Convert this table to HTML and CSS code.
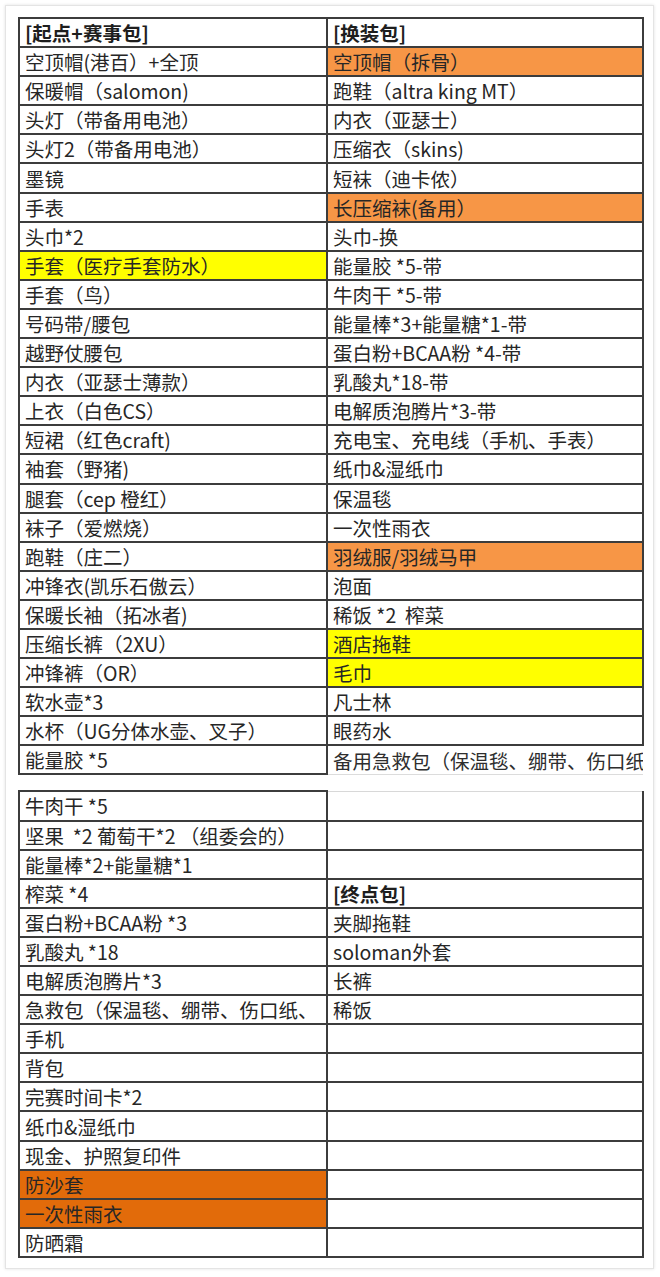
FILE: index.html
```html
<!DOCTYPE html>
<html lang="zh">
<head>
<meta charset="utf-8">
<title>装备清单</title>
<link rel="stylesheet" href="styles.css">
</head>
<body>
<div class="page">
  <div class="card">
    <table class="sheet">
      <colgroup><col class="c1"><col class="c2"></colgroup>
      <tr><td class="hd">[起点+赛事包]</td><td class="hd">[换装包]</td></tr>
      <tr><td>空顶帽(港百）+全顶</td><td class="orange">空顶帽（拆骨）</td></tr>
      <tr><td>保暖帽（salomon)</td><td>跑鞋（altra king MT）</td></tr>
      <tr><td>头灯（带备用电池）</td><td>内衣（亚瑟士）</td></tr>
      <tr><td>头灯2（带备用电池）</td><td>压缩衣（skins)</td></tr>
      <tr><td>墨镜</td><td>短袜（迪卡侬）</td></tr>
      <tr><td>手表</td><td class="orange">长压缩袜(备用）</td></tr>
      <tr><td>头巾*2</td><td>头巾-换</td></tr>
      <tr><td class="yellow">手套（医疗手套防水）</td><td>能量胶 *5-带</td></tr>
      <tr><td>手套（鸟）</td><td>牛肉干 *5-带</td></tr>
      <tr><td>号码带/腰包</td><td>能量棒*3+能量糖*1-带</td></tr>
      <tr><td>越野仗腰包</td><td>蛋白粉+BCAA粉 *4-带</td></tr>
      <tr><td>内衣（亚瑟士薄款）</td><td>乳酸丸*18-带</td></tr>
      <tr><td>上衣（白色CS）</td><td>电解质泡腾片*3-带</td></tr>
      <tr><td>短裙（红色craft)</td><td>充电宝、充电线（手机、手表）</td></tr>
      <tr><td>袖套（野猪)</td><td>纸巾&amp;湿纸巾</td></tr>
      <tr><td>腿套（cep 橙红）</td><td>保温毯</td></tr>
      <tr><td>袜子（爱燃烧）</td><td>一次性雨衣</td></tr>
      <tr><td>跑鞋（庄二）</td><td class="orange">羽绒服/羽绒马甲</td></tr>
      <tr><td>冲锋衣(凯乐石傲云）</td><td>泡面</td></tr>
      <tr><td>保暖长袖（拓冰者)</td><td>稀饭 *2&nbsp; 榨菜</td></tr>
      <tr><td>压缩长裤（2XU）</td><td class="yellow">酒店拖鞋</td></tr>
      <tr><td>冲锋裤（OR）</td><td class="yellow">毛巾</td></tr>
      <tr><td>软水壶*3</td><td>凡士林</td></tr>
      <tr><td>水杯（UG分体水壶、叉子）</td><td>眼药水</td></tr>
      <tr class="last"><td>能量胶 *5</td><td class="open">备用急救包（保温毯、绷带、伤口纸</td></tr>
    </table>

    <table class="sheet second">
      <colgroup><col class="c1"><col class="c2"></colgroup>
      <tr class="first"><td>牛肉干 *5</td><td></td></tr>
      <tr><td>坚果&nbsp; *2 葡萄干*2 （组委会的）</td><td></td></tr>
      <tr><td>能量棒*2+能量糖*1</td><td></td></tr>
      <tr><td>榨菜 *4</td><td class="hd">[终点包]</td></tr>
      <tr><td>蛋白粉+BCAA粉 *3</td><td>夹脚拖鞋</td></tr>
      <tr><td>乳酸丸 *18</td><td>soloman外套</td></tr>
      <tr><td>电解质泡腾片*3</td><td>长裤</td></tr>
      <tr><td>急救包（保温毯、绷带、伤口纸、</td><td>稀饭</td></tr>
      <tr><td>手机</td><td></td></tr>
      <tr><td>背包</td><td></td></tr>
      <tr><td>完赛时间卡*2</td><td></td></tr>
      <tr><td>纸巾&amp;湿纸巾</td><td></td></tr>
      <tr><td>现金、护照复印件</td><td></td></tr>
      <tr><td class="dark-orange">防沙套</td><td></td></tr>
      <tr><td class="dark-orange">一次性雨衣</td><td></td></tr>
      <tr><td>防晒霜</td><td></td></tr>
    </table>
  </div>
</div>
</body>
</html>
```

FILE: styles.css
```css
html, body {
  margin: 0;
  padding: 0;
  background: #ffffff;
}

.page {
  padding: 5px 6px 8px 5px;
}

.card {
  background: #ffffff;
  border: 1px solid #e4e4e4;
  box-shadow: 0 0 3px rgba(0, 0, 0, 0.12);
  padding: 11px 12px 10px 12px;
}

.sheet {
  border-collapse: collapse;
  table-layout: fixed;
  width: 624px;
  font-family: "Noto Sans CJK SC", "Noto Sans", sans-serif;
  font-size: 19.5px;
  color: #262626;
}

.sheet .c1 { width: 308px; }
.sheet .c2 { width: 316px; }

.sheet tr { height: 29.1px; }

.sheet td {
  border: 2px solid #3c3c3c;
  padding: 0 2px 0 5px;
  white-space: nowrap;
  overflow: hidden;
  line-height: 25px;
  vertical-align: middle;
}

.sheet td.hd {
  font-weight: bold;
  color: #1e1e1e;
}

.sheet td.orange { background: #f79646; }
.sheet td.yellow { background: #ffff00; }
.sheet td.dark-orange { background: #e26b0a; }

.sheet tr.last td.open {
  border-right: none;
  border-bottom: 1px solid #dcdcdc;
  color: #2e2e2e;
}

.second {
  margin-top: 15px;
}

.second tr.first td:last-child {
  border-top: 1px solid #d8d8d8;
}
```
